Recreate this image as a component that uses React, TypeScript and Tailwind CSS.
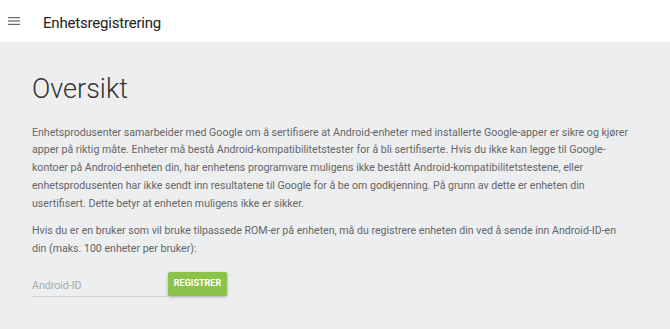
import React from 'react';

const INTRO = [
  'Enhetsprodusenter samarbeider med Google om å sertifisere at Android-enheter med installerte Google-apper er sikre og kjører',
  'apper på riktig måte. Enheter må bestå Android-kompatibilitetstester for å bli sertifiserte. Hvis du ikke kan legge til Google-',
  'kontoer på Android-enheten din, har enhetens programvare muligens ikke bestått Android-kompatibilitetstestene, eller',
  'enhetsprodusenten har ikke sendt inn resultatene til Google for å be om godkjenning. På grunn av dette er enheten din',
  'usertifisert. Dette betyr at enheten muligens ikke er sikker.',
];

const ROM_INFO = [
  'Hvis du er en bruker som vil bruke tilpassede ROM-er på enheten, må du registrere enheten din ved å sende inn Android-ID-en',
  'din (maks. 100 enheter per bruker):',
];

function Lines({ lines }: { lines: string[] }) {
  return (
    <>
      {lines.map((l, i) => (
        <span key={i} className="block whitespace-nowrap">{l}</span>
      ))}
    </>
  );
}

export default function App() {
  return (
    <div className="min-h-screen bg-[#eceef0] font-['Roboto',sans-serif]">
      <header className="h-[42px] bg-white flex items-center">
        <button type="button" className="ml-[8px] w-[12px] h-[42px] flex items-center" aria-label="Meny">
          <svg width="12" height="8" viewBox="0 0 12 8" className="text-[#666]">
            <rect x="0" y="0" width="12" height="1.2" fill="currentColor" />
            <rect x="0" y="3.4" width="12" height="1.2" fill="currentColor" />
            <rect x="0" y="6.8" width="12" height="1.2" fill="currentColor" />
          </svg>
        </button>
        <h1 className="ml-[23px] pt-[5px] text-[15px] tracking-[-0.2px] text-[#212121]">Enhetsregistrering</h1>
      </header>

      <main className="px-8 pt-[33.5px]">
        <h2 className="text-[27px] font-light text-[#333] leading-none">Oversikt</h2>
        <p className="mt-[21px] text-[10.6px] leading-[17.8px] text-[#666]">
          <Lines lines={INTRO} />
        </p>
        <p className="mt-[10px] text-[10.6px] leading-[17.8px] text-[#666]">
          <Lines lines={ROM_INFO} />
        </p>
        <div className="mt-[14px] flex items-end">
          <input
            type="text"
            placeholder="Android-ID"
            className="w-[136px] bg-transparent border-b border-[#d0d0d0] pb-[2px] text-[10.6px] text-[#444] placeholder:text-[#a8a8a8] outline-none"
          />
          <button type="button" className="w-[59px] h-[24px] bg-[#8bc34a] text-white text-[9px] font-bold rounded-[2px] shadow-[0_1px_3px_rgba(0,0,0,0.3)] mb-[1px]">
            REGISTRER
          </button>
        </div>
      </main>
    </div>
  );
}
